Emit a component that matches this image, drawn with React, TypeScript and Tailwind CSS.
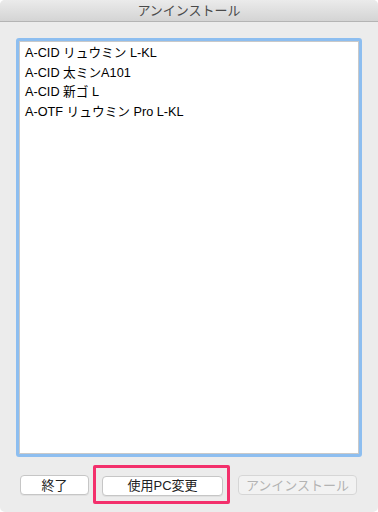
import React from "react";

const fonts = [
  "A-CID リュウミン L-KL",
  "A-CID 太ミンA101",
  "A-CID 新ゴ L",
  "A-OTF リュウミン Pro L-KL",
];

const App: React.FC = () => {
  return (
    <div
      className="w-[378px] h-[512px] bg-white"
      style={{ fontFamily: '"Liberation Sans", "Noto Sans CJK JP", sans-serif' }}
    >
      <div className="h-full rounded-[5px] bg-[#ececec] flex flex-col overflow-hidden">
        {/* Title bar */}
        <div className="h-[22px] shrink-0 bg-gradient-to-b from-[#ebebeb] to-[#d4d4d4] border-b border-[#b4b4b4] flex items-center justify-center">
          <span className="text-[13px] text-[#4a4a4a] leading-none">アンインストール</span>
        </div>

        <div className="flex flex-col px-[16px] pt-[16px]">
          {/* Font list */}
          <div className="h-[419px] rounded-[3px] border-[3px] border-[#8dbef0] bg-white">
            <div className="h-full border border-[#c9c9c9] bg-white pl-[5px] pt-[2px]">
              {fonts.map((f) => (
                <div key={f} className="text-[12.7px] leading-[19.7px] text-black">
                  {f}
                </div>
              ))}
            </div>
          </div>

          {/* Buttons */}
          <div className="flex items-center mt-[16px] pl-[4px]">
            <button className="w-[69px] h-[20px] rounded-[4px] bg-white border border-[#c6c6c6] shadow-[0_1px_0_rgba(0,0,0,0.05)] text-[13px] text-[#222] leading-none">
              終了
            </button>
            <div className="relative ml-[13px]">
              <button className="w-[121px] h-[20px] rounded-[4px] bg-white border border-[#c6c6c6] shadow-[0_1px_0_rgba(0,0,0,0.05)] text-[13px] text-[#222] leading-none">
                使用PC変更
              </button>
              <div className="absolute -left-[9px] -right-[7px] -top-[8px] -bottom-[7px] border-[3px] border-[#f3306c] rounded-[2px] pointer-events-none" />
            </div>
            <button
              disabled
              className="ml-[15px] w-[119px] h-[20px] rounded-[4px] bg-[#f2f2f2] border border-[#d6d6d6] text-[13px] text-[#b3b3b3] leading-none"
            >
              アンインストール
            </button>
          </div>
        </div>
      </div>
    </div>
  );
};

export default App;
